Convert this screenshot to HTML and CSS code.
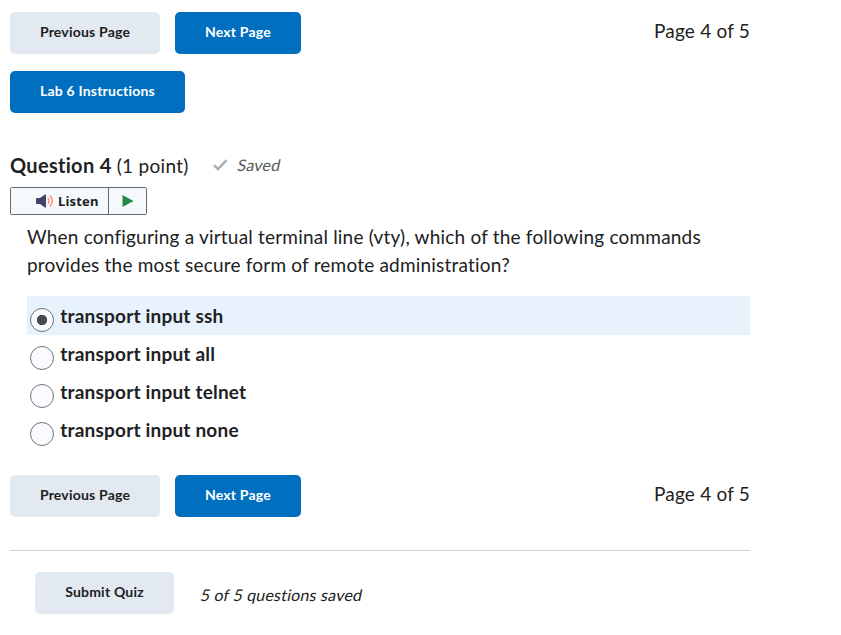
FILE: index.html
```html
<!DOCTYPE html>
<html lang="en">
<head>
<meta charset="utf-8">
<title>Quiz</title>
<link rel="stylesheet" href="styles.css">
</head>
<body>
<main class="quiz">
  <nav class="pager">
    <button class="btn">Previous Page</button>
    <button class="btn primary next">Next Page</button>
    <span class="page-count">Page 4 of 5</span>
  </nav>
  <button class="btn primary lab">Lab 6 Instructions</button>
  <header class="question-head">
    <h2><b>Question 4</b> (1 point)</h2>
    <svg class="check" width="16" height="14" viewBox="0 0 16 14"><path d="M1 7.2 5 11.2 13.5 2.2" fill="none" stroke="#abb1b6" stroke-width="2.6"/></svg>
    <em class="saved">Saved</em>
  </header>
  <div class="listen">
    <button class="listen-main">
      <svg width="18" height="14" viewBox="0 0 18 14"><path d="M0 5q0-1 1-1h3l5-3.5h1v13H9L4 10H1q-1 0-1-1z" fill="#42446a"/><path d="M12 4q2 3 0 6M14 1.5q4.5 5.500 0 11" fill="none" stroke="#ff7e6b" stroke-width="1.3"/></svg>
      <span>Listen</span>
    </button>
    <button class="listen-play"><svg width="12" height="12" viewBox="0 0 12 12"><path d="M.5 0 11.500 6 .5 12z" fill="#23894a"/></svg></button>
  </div>
  <p class="prompt">When configuring a virtual terminal line (vty), which of the following commands<br>provides the most secure form of remote administration?</p>
  <div class="answers">
    <label class="answer selected"><span class="radio"></span><span>transport input ssh</span></label>
    <label class="answer"><span class="radio"></span><span>transport input all</span></label>
    <label class="answer"><span class="radio"></span><span>transport input telnet</span></label>
    <label class="answer"><span class="radio"></span><span>transport input none</span></label>
  </div>
  <nav class="pager">
    <button class="btn">Previous Page</button>
    <button class="btn primary next">Next Page</button>
    <span class="page-count">Page 4 of 5</span>
  </nav>
  <footer class="submit">
    <button class="btn submit-btn">Submit Quiz</button>
    <em>5 of 5 questions saved</em>
  </footer>
</main>
</body>
</html>
```
FILE: styles.css
```css
* { box-sizing: border-box; }
body { margin: 0; background: #fff; color: #202122; font-family: Lato, sans-serif; }
button { font-family: inherit; color: inherit; padding: 0; }
em { font-style: normal; letter-spacing: .2px; transform: skewX(-12deg); }
.quiz { width: 740px; margin: 12px 0 0 10px; }
.pager { display: flex; height: 42px; gap: 15px; }
.btn { display: block; width: 150px; height: 42px; border: 0; border-radius: 5px; background: #e3e9f1; font-size: 14px; font-weight: 700; line-height: 20px; padding-bottom: 2px; letter-spacing: .2px; }
.primary { background: #006fbf; color: #fff; }
.next { width: 126px; }
.lab { width: 175px; margin-top: 17px; }
.page-count { margin-left: auto; font-size: 19px; line-height: 38px; letter-spacing: .2px; }
.question-head { display: flex; height: 28px; margin-top: 38px; align-items: center; }
h2 { margin: 0; width: 203px; font-size: 19px; font-weight: 400; letter-spacing: .3px; white-space: nowrap; }
h2 b { font-size: 20px; }
.check { margin-top: 0; }
.saved { margin: -2px 0 0 9px; font-size: 16px; color: #565a5c; }
.listen { display: flex; width: 137px; height: 28px; margin-top: 8px; border: 1px solid #606b76; border-radius: 2px; }
.listen button { display: flex; align-items: center; background: #f5f9fc; border: 0; }
.listen .listen-main { width: 97px; padding-left: 25px; gap: 4px; font: 700 13px/20px "Noto Sans", sans-serif; letter-spacing: .2px; }
.listen .listen-play { flex: 1; justify-content: center; border-left: 1px solid #606b76; }
.prompt { margin: 8px 0 17px 17px; font-size: 19px; line-height: 28px; letter-spacing: .2px; white-space: nowrap; }
.answers { margin-left: 17px; }
.answer { display: flex; height: 38px; padding: 12px 0 0 3px; gap: 6.300px; font-size: 19px; font-weight: 700; line-height: 24px; letter-spacing: .2px; }
.answer > span:last-child { margin-top: -4px; }
.selected { height: 39px; margin-bottom: -1px; background: #e8f2fc; }
.radio { width: 24px; height: 24px; border: 1px solid #6e7376; border-radius: 50%; background: #f9fbff; }
.selected .radio { background: radial-gradient(circle, #494c4e 0 4.800px, #f9fbff 5.500px); }
.answers + .pager { margin-top: 27px; }
.submit { display: flex; margin-top: 33px; padding: 21px 0 0 25px; border-top: 1px solid #cdd5dc; gap: 27px; font-size: 16px; line-height: 46px; }
.submit-btn { width: 139px; }
```
